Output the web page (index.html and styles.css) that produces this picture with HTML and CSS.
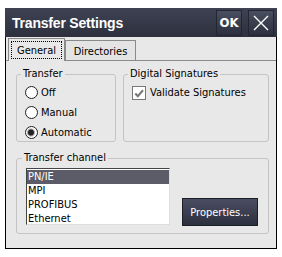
FILE: index.html
```html
<!DOCTYPE html>
<html lang="en">

<head>
    <meta charset="UTF-8">
    <meta name="viewport" content="width=device-width, initial-scale=1.0">
    <title>Transfer Settings</title>

    <link rel="stylesheet" href="styles.css">
</head>

<body>
    <div id="janela">
        <div class="titulo">
            <span class="titulo-texto">Transfer Settings</span>
            <button class="botao-titulo ok">OK</button>
            <button class="botao-titulo fechar">
                <svg width="16" height="16" viewBox="0 0 16 16">
                    <path d="M1 1 L15 15 M15 1 L1 15" stroke="#fff" stroke-width="1.4" fill="none" />
                </svg>
            </button>
        </div>

        <div class="abas">
            <div class="aba ativa"><span class="foco">General</span></div>
            <div class="aba">Directories</div>
        </div>

        <div class="painel">
            <div class="linha">
                <fieldset class="grupo transfer">
                    <legend>Transfer</legend>
                    <div class="opcao"><span class="radio"></span>Off</div>
                    <div class="opcao"><span class="radio"></span>Manual</div>
                    <div class="opcao"><span class="radio marcado"></span>Automatic</div>
                </fieldset>

                <fieldset class="grupo assinaturas">
                    <legend>Digital Signatures</legend>
                    <div class="opcao">
                        <span class="check">
                            <svg width="13" height="13" viewBox="0 0 13 13">
                                <path d="M2.5 6.5 L5.2 9.5 L10.8 3" stroke="#777" stroke-width="2.2" fill="none" />
                            </svg>
                        </span>Validate Signatures
                    </div>
                </fieldset>
            </div>

            <fieldset class="grupo canal">
                <legend>Transfer channel</legend>
                <div class="conteudo-canal">
                    <div class="lista">
                        <div class="item selecionado">PN/IE</div>
                        <div class="item">MPI</div>
                        <div class="item">PROFIBUS</div>
                        <div class="item">Ethernet</div>
                    </div>
                    <button class="botao">Properties...</button>
                </div>
            </fieldset>
        </div>
    </div>
</body>

</html>
```

FILE: styles.css
```css
* {
    padding: 0;
    margin: 0;
    box-sizing: border-box;
}

body {
    background-color: white;
    font-family: 'DejaVu Sans Condensed', 'DejaVu Sans', sans-serif;
    font-size: 11px;
    color: #000;
}

#janela {
    margin: 8px 0 0 5px;
    width: 272px;
    height: 241px;
    background-color: #e8e8e8;
    border: 1px solid #000;
    border-top: none;
}

.titulo {
    height: 29px;
    margin: 0 -1px;
    background: linear-gradient(#3e4253, #2d303d);
    display: flex;
    align-items: center;
    padding: 0 3px 0 7px;
}

.titulo-texto {
    flex: 1;
    color: white;
    font-family: 'Liberation Sans', Arial, sans-serif;
    font-weight: bold;
    font-size: 14px;
    letter-spacing: -0.2px;
    padding-top: 1px;
}

.botao-titulo {
    width: 26px;
    height: 26px;
    margin-left: 6px;
    border: none;
    background: linear-gradient(#4a4f62, #2a2e3c);
    box-shadow: inset 0 0 0 1px #23262f;
    color: white;
    font-family: 'DejaVu Sans Condensed', sans-serif;
    font-weight: bold;
    font-size: 13px;
    display: flex;
    align-items: center;
    justify-content: center;
}

.abas {
    display: flex;
    align-items: flex-end;
    height: 24px;
    padding-left: 2px;
    border-bottom: 1px solid #8a8a8a;
}

.aba {
    height: 20px;
    width: 71px;
    border: 1px solid #8a8a8a;
    border-bottom: none;
    background-color: #e4e4e4;
    display: flex;
    align-items: center;
    justify-content: center;
    padding-top: 2px;
}

.aba.ativa {
    height: 23px;
    width: 57px;
    margin-bottom: -1px;
    padding: 0 2px;
    background-color: #e8e8e8;
}

.foco {
    border: 1px dotted #000;
    width: 100%;
    height: 18px;
    display: flex;
    align-items: center;
    justify-content: center;
}

.painel {
    padding: 6px 7px 0 10px;
}

.linha {
    display: flex;
    gap: 7px;
}

.grupo {
    border: 1px solid #c4c4c4;
    border-radius: 3px;
    padding: 0 0 0 8px;
}

.grupo legend {
    padding: 0 2px;
    margin-left: -4px;
    line-height: 14px;
}

.transfer {
    width: 100px;
    height: 75px;
}

.assinaturas {
    width: 146px;
    height: 75px;
}

.opcao {
    display: flex;
    align-items: center;
    height: 19px;
    margin-top: 1px;
}

.opcao:first-of-type {
    margin-top: 2px;
}

.radio {
    width: 13px;
    height: 13px;
    border: 1px solid #222;
    border-radius: 50%;
    background-color: white;
    margin-right: 3px;
}

.radio.marcado {
    background: radial-gradient(circle at 45% 50%, #222 0 2.5px, #aaa 3.5px, white 4.5px);
}

.check {
    width: 14px;
    height: 14px;
    border: 1px solid #777;
    background-color: white;
    margin-right: 4px;
    display: flex;
}

.canal {
    margin-top: 9px;
    height: 83px;
    padding-left: 9px;
}

.conteudo-canal {
    display: flex;
    align-items: flex-end;
    gap: 12px;
    padding-top: 3px;
}

.lista {
    width: 144px;
    height: 57px;
    background-color: white;
    border-top: 1px solid #444;
    border-left: 1px solid #444;
    border-right: 1px solid #ddd;
    border-bottom: 1px solid #ddd;
    padding-top: 1px;
}

.item {
    height: 14px;
    line-height: 14px;
    padding-left: 1px;
}

.item.selecionado {
    background-color: #5c5c68;
    color: white;
}

.botao {
    width: 76px;
    height: 28px;
    margin-bottom: -1px;
    border: 1px solid #1c1e26;
    background: linear-gradient(#4a4e62, #2c2f3d);
    color: white;
    font-family: 'DejaVu Sans Condensed', 'DejaVu Sans', sans-serif;
    font-size: 11px;
}
```
